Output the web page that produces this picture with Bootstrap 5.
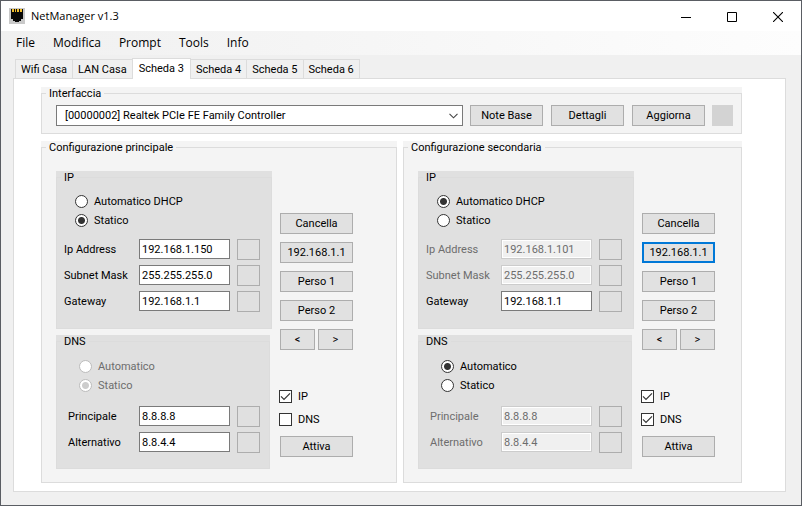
<!DOCTYPE html>
<html lang="it">
<head>
<meta charset="utf-8">
<meta name="viewport" content="width=device-width, initial-scale=1">
<title>NetManager v1.3</title>
<link href="https://cdn.jsdelivr.net/npm/bootstrap@5.3.0/dist/css/bootstrap.min.css" rel="stylesheet">
<style>
body { font: 11px/13px Roboto, "Liberation Sans", sans-serif; color: #000; background: #f0f0f0; }
.app-window { border: 1px solid #5a5d63; background: #f0f0f0; }
.title-bar { height: 30px; background: #fff; font: 11px/16px "Open Sans", "Noto Sans", sans-serif; padding-left: 8px; }
.title-text { margin: 0 auto 0 6px; }
.caption-btn { width: 46px; height: 30px; border: 0; background: none; padding: 0; }
.menu-bar { height: 24px; gap: 18px; padding-left: 15px; background: linear-gradient(90deg, #f0f0f0, #fdfdfd); font: 12px/16px "Open Sans", "Noto Sans", sans-serif; }
.menu-bar a { color: #000; text-decoration: none; }
.tab-area { padding: 3px 15px 13px 12px; }
.nav-tabs { border: 0; padding-left: 3px; align-items: flex-end; }
.nav-tabs .nav-link { height: 19px; padding: 0 5px; margin: 0 0 0 -1px; border: 1px solid #dcdcdc; border-bottom: 0; border-radius: 0; color: #000; background: #f0f0f0; }
.nav-tabs .nav-link.active { position: relative; height: 21px; padding: 0 6px 2px; margin-bottom: -1px; border-color: #dcdcdc; color: #000; background: #fff; }
.tab-page { border: 1px solid #dcdcdc; background: #fff; padding: 8px 43px 8px 27px; }
.group-box { background: #f4f4f4; }
.group-box > fieldset { border: 1px solid #dcdcdc; min-width: 0; }
.group-box > fieldset > legend { float: none; width: auto; margin: 0 0 0 4px; padding: 0 3px; font-size: 11px; line-height: 13px; background: #f4f4f4; }
.shaded, .shaded > fieldset > legend { background: #e0e0e0; }
.shaded > fieldset { border-color: #dcdcdc; }
.shaded .secondary-off { color: #6d6d6d; }
.iface-row { padding: 5px 8px 7px 14px; gap: 7px; }
.iface-actions { gap: 8px; }
.form-select.iface { height: 21px; min-width: 0; padding: 0 24px 0 8px; border: 1px solid #7a7a7a; border-radius: 0; font-size: 11px; line-height: 13px; color: #000; background-color: #fff; background-position: right 4px center; background-size: 9px 6px;
  background-image: url("data:image/svg+xml,%3Csvg xmlns='http://www.w3.org/2000/svg' viewBox='0 0 9 6'%3E%3Cpath d='M.5 .8l4 4 4-4' fill='none' stroke='%23444' stroke-width='1.1'/%3E%3C/svg%3E"); }
.win-btn { height: 21px; width: 73px; flex: none; padding: 0; border: 1px solid #adadad; border-radius: 0; background: #e1e1e1; color: #000; font-size: 11px; line-height: 13px; }
.win-btn.half { width: 35px; }
.win-btn.slot { width: 23px; background: #e0e0e0; }
.win-btn.swatch { width: 21px; border-color: #d3d3d3; background: #d3d3d3; }
.win-btn.focused { border: 2px solid #0078d7; }
.configs { gap: 6px; margin-top: 7px; }
.config-main { flex: 356 1 0; }
.config-alt { flex: 339 1 0; }
.config-body { gap: 8px; padding: 17px 26px 13px 14px; }
.config-main .config-body { padding-right: 43px; }
.boxes { gap: 6px; }
.box-dns { margin-right: 2px; }
.box-body { padding: 8px 11px 14px 7px; }
.box-dns .box-body { padding: 9px 9px 13px 11px; }
.choice { height: 19px; gap: 6px; padding-left: 11px; }
.choice label, .flag label { margin: 0; }
.rows { margin-top: 6px; }
.box-dns .rows { margin-top: 8px; }
.entry { height: 26px; }
.entry label { width: 75px; flex: none; }
.box-dns .entry label { width: 71px; }
.entry .form-control { height: 20px; min-width: 0; padding: 0 2px; margin-right: 7px; border: 1px solid #7a7a7a; border-radius: 0; font-size: 11px; line-height: 13px; color: #000; background: #fff; }
.entry .form-control:disabled { color: #6d6d6d; border-color: #ccc; background: #f0f0f0; box-shadow: inset 0 0 0 1px #fff; }
.form-check-input { width: 13px; height: 13px; margin: 0; flex: none; border: 1px solid #333; background-color: #fff; }
.form-check-input[type=checkbox] { border-radius: 0; }
.form-check-input:checked { border-color: #333; background-color: #fff; }
.form-check-input:checked[type=radio] { background-image: radial-gradient(circle, #333 3px, transparent 4px); }
.form-check-input:checked[type=checkbox] { background-size: 11px 11px; background-image: url("data:image/svg+xml,%3Csvg xmlns='http://www.w3.org/2000/svg' viewBox='0 0 11 11'%3E%3Cpath d='M1 5.3l3 3 6-6' fill='none' stroke='%23333' stroke-width='1.2'/%3E%3C/svg%3E"); }
.form-check-input:disabled, .form-check-input:disabled ~ label { opacity: 1; }
.form-check-input:disabled { border-color: #bcbcbc; }
.form-check-input:disabled:checked[type=radio] { background-image: radial-gradient(circle, #ccc 3px, transparent 4px); }
.choice .form-check-input:disabled ~ label { color: #6d6d6d; }
.actions { width: 73px; flex: none; gap: 8px; padding-top: 42px; }
.pair { gap: 3px; }
.flags { margin: 27px 0 -3px -1px; }
.flag { height: 23px; gap: 6px; }
</style>
<script src="https://cdn.jsdelivr.net/npm/bootstrap@5.3.0/dist/js/bootstrap.bundle.min.js"></script>
</head>
<body>
<div class="app-window min-vh-100">
  <header class="title-bar d-flex align-items-center">
    <svg width="16" height="16" viewBox="0 0 16 16" aria-hidden="true"><path fill="#c9c9c9" d="M0 0h16v16H0z"/><path fill="#080808" d="M2 1h12v10h-2v2h-2v1H6v-1H4v-2H2z"/><path fill="#f0bd2c" d="M3 1h2v3H3zM6 1h1v3H6zM8 1h2v3H8zM11 1h2v3h-2z"/></svg>
    <span class="title-text">NetManager v1.3</span>
    <button class="caption-btn" aria-label="Riduci a icona"><svg width="10" height="10" viewBox="0 0 10 10"><path d="M0 5.5h10" stroke="#000"/></svg></button>
    <button class="caption-btn" aria-label="Ingrandisci"><svg width="10" height="10" viewBox="0 0 10 10"><path d="M.5.5h9v9h-9z" fill="none" stroke="#000"/></svg></button>
    <button class="caption-btn" aria-label="Chiudi"><svg width="10" height="10" viewBox="0 0 10 10"><path d="M0 0l10 10M10 0L0 10" stroke="#000" stroke-width="1.1"/></svg></button>
  </header>
  <nav class="menu-bar d-flex align-items-center">
    <a href="#">File</a><a href="#">Modifica</a><a href="#">Prompt</a><a href="#">Tools</a><a href="#">Info</a>
  </nav>
  <main class="tab-area">
    <ul class="nav nav-tabs" role="tablist">
      <li><button class="nav-link" role="tab">Wifi Casa</button></li>
      <li><button class="nav-link" role="tab">LAN Casa</button></li>
      <li><button class="nav-link active" role="tab" aria-selected="true">Scheda 3</button></li>
      <li><button class="nav-link" role="tab">Scheda 4</button></li>
      <li><button class="nav-link" role="tab">Scheda 5</button></li>
      <li><button class="nav-link" role="tab">Scheda 6</button></li>
    </ul>
    <div class="tab-page" role="tabpanel">
      <div class="group-box"><fieldset>
        <legend>Interfaccia</legend>
        <div class="iface-row d-flex align-items-center">
          <select class="form-select iface flex-grow-1" aria-label="Interfaccia"><option>[00000002] Realtek PCIe FE Family Controller</option></select>
          <div class="iface-actions d-flex">
            <button class="btn win-btn">Note Base</button>
            <button class="btn win-btn">Dettagli</button>
            <button class="btn win-btn">Aggiorna</button>
          </div>
          <button class="btn win-btn swatch" aria-label="Stato"></button>
        </div>
      </fieldset></div>

      <div class="configs d-flex">
        <div class="group-box config-main"><fieldset>
          <legend>Configurazione principale</legend>
          <div class="config-body d-flex">
            <div class="boxes d-flex flex-column flex-grow-1">
              <div class="group-box shaded"><fieldset>
                <legend>IP</legend>
                <div class="box-body">
                  <div class="choice d-flex align-items-center"><input class="form-check-input" type="radio" name="ip1" id="ip1a"><label for="ip1a">Automatico DHCP</label></div>
                  <div class="choice d-flex align-items-center"><input class="form-check-input" type="radio" name="ip1" id="ip1s" checked><label for="ip1s">Statico</label></div>
                  <div class="rows">
                    <div class="entry d-flex align-items-center"><label for="addr1">Ip Address</label><input class="form-control" id="addr1" value="192.168.1.150"><button class="btn win-btn slot" aria-label="Imposta indirizzo"></button></div>
                    <div class="entry d-flex align-items-center"><label for="mask1">Subnet Mask</label><input class="form-control" id="mask1" value="255.255.255.0"><button class="btn win-btn slot" aria-label="Imposta maschera"></button></div>
                    <div class="entry d-flex align-items-center"><label for="gw1">Gateway</label><input class="form-control" id="gw1" value="192.168.1.1"><button class="btn win-btn slot" aria-label="Imposta gateway"></button></div>
                  </div>
                </div>
              </fieldset></div>
              <div class="group-box shaded box-dns"><fieldset>
                <legend>DNS</legend>
                <div class="box-body">
                  <div class="choice d-flex align-items-center"><input class="form-check-input" type="radio" name="dns1" id="dns1a" disabled><label for="dns1a">Automatico</label></div>
                  <div class="choice d-flex align-items-center"><input class="form-check-input" type="radio" name="dns1" id="dns1s" checked disabled><label for="dns1s">Statico</label></div>
                  <div class="rows">
                    <div class="entry d-flex align-items-center"><label for="pri1">Principale</label><input class="form-control" id="pri1" value="8.8.8.8"><button class="btn win-btn slot" aria-label="Imposta DNS principale"></button></div>
                    <div class="entry d-flex align-items-center"><label for="alt1">Alternativo</label><input class="form-control" id="alt1" value="8.8.4.4"><button class="btn win-btn slot" aria-label="Imposta DNS alternativo"></button></div>
                  </div>
                </div>
              </fieldset></div>
            </div>
            <div class="actions d-flex flex-column">
              <button class="btn win-btn">Cancella</button>
              <button class="btn win-btn">192.168.1.1</button>
              <button class="btn win-btn">Perso 1</button>
              <button class="btn win-btn">Perso 2</button>
              <div class="pair d-flex"><button class="btn win-btn half">&lt;</button><button class="btn win-btn half">&gt;</button></div>
              <div class="flags">
                <div class="flag d-flex align-items-center"><input class="form-check-input" type="checkbox" id="useip1" checked><label for="useip1">IP</label></div>
                <div class="flag d-flex align-items-center"><input class="form-check-input" type="checkbox" id="usedns1"><label for="usedns1">DNS</label></div>
              </div>
              <button class="btn win-btn">Attiva</button>
            </div>
          </div>
        </fieldset></div>

        <div class="group-box config-alt"><fieldset>
          <legend>Configurazione secondaria</legend>
          <div class="config-body d-flex">
            <div class="boxes d-flex flex-column flex-grow-1">
              <div class="group-box shaded"><fieldset>
                <legend>IP</legend>
                <div class="box-body">
                  <div class="choice d-flex align-items-center"><input class="form-check-input" type="radio" name="ip2" id="ip2a" checked><label for="ip2a">Automatico DHCP</label></div>
                  <div class="choice d-flex align-items-center"><input class="form-check-input" type="radio" name="ip2" id="ip2s"><label for="ip2s">Statico</label></div>
                  <div class="rows">
                    <div class="entry d-flex align-items-center"><label class="secondary-off" for="addr2">Ip Address</label><input class="form-control" id="addr2" value="192.168.1.101" disabled><button class="btn win-btn slot" aria-label="Imposta indirizzo"></button></div>
                    <div class="entry d-flex align-items-center"><label class="secondary-off" for="mask2">Subnet Mask</label><input class="form-control" id="mask2" value="255.255.255.0" disabled><button class="btn win-btn slot" aria-label="Imposta maschera"></button></div>
                    <div class="entry d-flex align-items-center"><label for="gw2">Gateway</label><input class="form-control" id="gw2" value="192.168.1.1"><button class="btn win-btn slot" aria-label="Imposta gateway"></button></div>
                  </div>
                </div>
              </fieldset></div>
              <div class="group-box shaded box-dns"><fieldset>
                <legend>DNS</legend>
                <div class="box-body">
                  <div class="choice d-flex align-items-center"><input class="form-check-input" type="radio" name="dns2" id="dns2a" checked><label for="dns2a">Automatico</label></div>
                  <div class="choice d-flex align-items-center"><input class="form-check-input" type="radio" name="dns2" id="dns2s"><label for="dns2s">Statico</label></div>
                  <div class="rows">
                    <div class="entry d-flex align-items-center"><label class="secondary-off" for="pri2">Principale</label><input class="form-control" id="pri2" value="8.8.8.8" disabled><button class="btn win-btn slot" aria-label="Imposta DNS principale"></button></div>
                    <div class="entry d-flex align-items-center"><label class="secondary-off" for="alt2">Alternativo</label><input class="form-control" id="alt2" value="8.8.4.4" disabled><button class="btn win-btn slot" aria-label="Imposta DNS alternativo"></button></div>
                  </div>
                </div>
              </fieldset></div>
            </div>
            <div class="actions d-flex flex-column">
              <button class="btn win-btn">Cancella</button>
              <button class="btn win-btn focused">192.168.1.1</button>
              <button class="btn win-btn">Perso 1</button>
              <button class="btn win-btn">Perso 2</button>
              <div class="pair d-flex"><button class="btn win-btn half">&lt;</button><button class="btn win-btn half">&gt;</button></div>
              <div class="flags">
                <div class="flag d-flex align-items-center"><input class="form-check-input" type="checkbox" id="useip2" checked><label for="useip2">IP</label></div>
                <div class="flag d-flex align-items-center"><input class="form-check-input" type="checkbox" id="usedns2" checked><label for="usedns2">DNS</label></div>
              </div>
              <button class="btn win-btn">Attiva</button>
            </div>
          </div>
        </fieldset></div>
      </div>
    </div>
  </main>
</div>
</body>
</html>
